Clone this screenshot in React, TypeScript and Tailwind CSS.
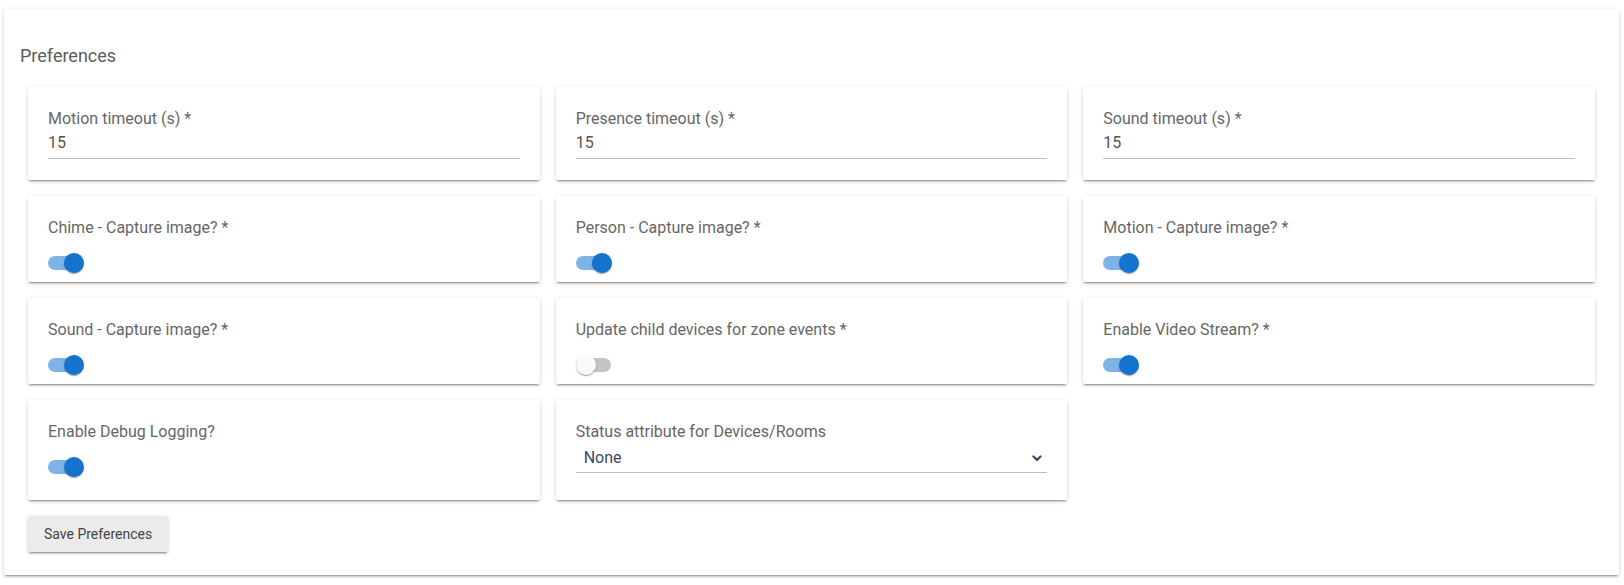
import type { ReactNode } from 'react';

const cardShadow =
  'shadow-[0_2px_2px_0_rgba(0,0,0,0.14),0_3px_1px_-2px_rgba(0,0,0,0.2),0_1px_5px_0_rgba(0,0,0,0.12)]';

function Card({ children, className = '' }: { children: ReactNode; className?: string }) {
  return (
    <div
      className={`bg-white rounded-[2px] px-5 pt-5 shadow-[0_2px_2px_0_rgba(0,0,0,0.14),0_3px_1px_-2px_rgba(0,0,0,0.2),0_1px_5px_0_rgba(0,0,0,0.12)] ${className}`}
    >
      {children}
    </div>
  );
}

function Label({ text }: { text: string }) {
  return <div className="text-[16px] leading-6 text-[#666]">{text}</div>;
}

function NumberField({ label, value }: { label: string; value: string }) {
  return (
    <Card className="pb-[21px]">
      <Label text={label} />
      <div className="text-[16px] leading-6 text-[#555] pb-[3px] border-b border-[#bdbdbd]">{value}</div>
    </Card>
  );
}

function Toggle({ on }: { on: boolean }) {
  return (
    <div className="relative w-[36px] h-5">
      <div
        className={`absolute left-0 top-[3px] w-[35px] h-[14px] rounded-full ${
          on ? 'bg-[#7fb2e5]' : 'bg-[#c4c4c4]'
        }`}
      />
      <div
        className={`absolute top-0 w-5 h-5 rounded-full shadow-[0_2px_1px_-1px_rgba(0,0,0,0.2),0_1px_1px_0_rgba(0,0,0,0.14),0_1px_3px_0_rgba(0,0,0,0.12)] ${
          on ? 'left-[16px] bg-[#1473cf]' : 'left-0 bg-[#fafafa]'
        }`}
      />
    </div>
  );
}

function SwitchField({ label, on }: { label: string; on: boolean }) {
  return (
    <Card>
      <Label text={label} />
      <div className="mt-1 h-[38px] flex items-center">
        <Toggle on={on} />
      </div>
    </Card>
  );
}

function SelectField({ label, value }: { label: string; value: string }) {
  return (
    <Card className="pb-[27px]">
      <Label text={label} />
      <div className="flex items-center justify-between pt-[2px] pb-[2px] border-b border-[#bdbdbd]">
        <span className="pl-2 text-[16px] leading-6 text-[#3a4766]">{value}</span>
        <svg width="10" height="7" viewBox="0 0 10 7" className="mr-[5px]">
          <path d="M1.5 1.5 L5 5 L8.5 1.5" fill="none" stroke="#3a4766" strokeWidth="2.2" strokeLinecap="round" strokeLinejoin="round" />
        </svg>
      </div>
    </Card>
  );
}

export default function App() {
  return (
    <div className="min-h-[585px] bg-white pl-1 pr-[5px] pt-[9px] font-['Roboto',sans-serif]">
      <div className={`bg-white rounded-[2px] pt-[33px] pb-[23px] ${cardShadow}`}>
        <h2 className="pl-4 text-[18px] leading-7 text-[#5c5c5c] font-normal mb-[17px]">Preferences</h2>
        <div className="px-6">
          <div className="grid grid-cols-3 gap-4">
            <NumberField label="Motion timeout (s) *" value="15" />
            <NumberField label="Presence timeout (s) *" value="15" />
            <NumberField label="Sound timeout (s) *" value="15" />

            <SwitchField label="Chime - Capture image? *" on />
            <SwitchField label="Person - Capture image? *" on />
            <SwitchField label="Motion - Capture image? *" on />

            <SwitchField label="Sound - Capture image? *" on />
            <SwitchField label="Update child devices for zone events *" on={false} />
            <SwitchField label="Enable Video Stream? *" on />

            <SwitchField label="Enable Debug Logging?" on />
            <SelectField label="Status attribute for Devices/Rooms" value="None" />
          </div>
          <button
            className={`mt-4 h-9 px-4 rounded-[2px] bg-[#ebebeb] text-[14px] text-[#444] ${cardShadow}`}
          >
            Save Preferences
          </button>
        </div>
      </div>
    </div>
  );
}
